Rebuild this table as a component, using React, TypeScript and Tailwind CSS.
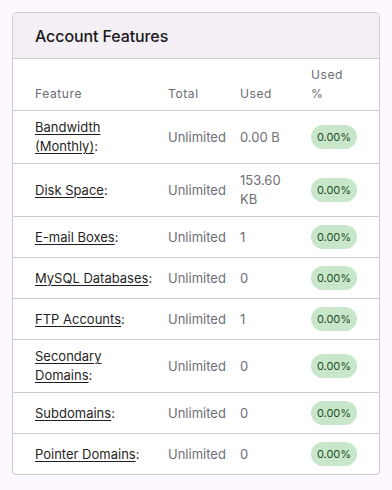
import React from 'react';

interface FeatureRow {
  name: string[];
  total: string;
  used: string;
  percent: string;
}

const rows: FeatureRow[] = [
  { name: ['Bandwidth', '(Monthly)'], total: 'Unlimited', used: '0.00 B', percent: '0.00%' },
  { name: ['Disk Space'], total: 'Unlimited', used: '153.60 KB', percent: '0.00%' },
  { name: ['E-mail Boxes'], total: 'Unlimited', used: '1', percent: '0.00%' },
  { name: ['MySQL Databases'], total: 'Unlimited', used: '0', percent: '0.00%' },
  { name: ['FTP Accounts'], total: 'Unlimited', used: '1', percent: '0.00%' },
  { name: ['Secondary', 'Domains'], total: 'Unlimited', used: '0', percent: '0.00%' },
  { name: ['Subdomains'], total: 'Unlimited', used: '0', percent: '0.00%' },
  { name: ['Pointer Domains'], total: 'Unlimited', used: '0', percent: '0.00%' },
];

export default function App() {
  return (
    <div className="min-h-[490px] bg-[#fdf8fd] p-3 font-['Inter',sans-serif]">
      <div className="bg-white border border-[#cfcbd2] rounded-[4px] overflow-hidden">
        {/* Card header */}
        <div className="bg-[#f3eff5] border-b border-[#cfcbd2] h-[46px] flex items-center px-[22px]">
          <h2 className="text-[16px] font-medium text-[#1a1a1a] tracking-[-0.1px]">Account Features</h2>
        </div>

        <table className="w-full table-fixed border-collapse">
          <colgroup>
            <col className="w-[148px]" />
            <col className="w-[72px]" />
            <col className="w-[71px]" />
            <col />
          </colgroup>
          <thead>
            <tr className="border-b border-[#cfcbd2] text-[12px] leading-[19px] tracking-[0.6px] text-[#6b6b73] font-normal">
              <th className="text-left align-bottom font-normal pl-[22px] pr-2 pt-[6px] pb-[7px]">Feature</th>
              <th className="text-left align-bottom font-normal px-[7px] pt-[6px] pb-[7px]">Total</th>
              <th className="text-left align-bottom font-normal px-[7px] pt-[6px] pb-[7px]">Used</th>
              <th className="text-left align-bottom font-normal pl-[7px] pr-[22px] pt-[6px] pb-[7px]">
                Used
                <br />%
              </th>
            </tr>
          </thead>
          <tbody className="text-[13px] leading-[19px]">
            {rows.map((row, i) => (
              <tr key={i} className={i < rows.length - 1 ? 'border-b border-[#cfcbd2]' : ''}>
                <td className="pl-[22px] pr-2 py-[7px] align-middle text-[#1f1f24]">
                  {row.name.map((part, j) => (
                    <span key={j}>
                      <a href="#" className="underline underline-offset-2 decoration-1 decoration-[#1f1f24]">
                        {part}
                      </a>
                      {j === row.name.length - 1 ? ':' : <br />}
                    </span>
                  ))}
                </td>
                <td className="px-[7px] py-[7px] align-middle text-[#6e6e76]">{row.total}</td>
                <td className="px-[7px] py-[7px] align-middle text-[#6e6e76]">{row.used}</td>
                <td className="pl-[7px] pr-[22px] py-[8px] align-middle">
                  <span className="flex items-center justify-center h-[24px] w-[46px] rounded-full bg-[#c8e6c9] text-[11px] leading-none text-[#1f4d25]">
                    {row.percent}
                  </span>
                </td>
              </tr>
            ))}
          </tbody>
        </table>
      </div>
    </div>
  );
}
